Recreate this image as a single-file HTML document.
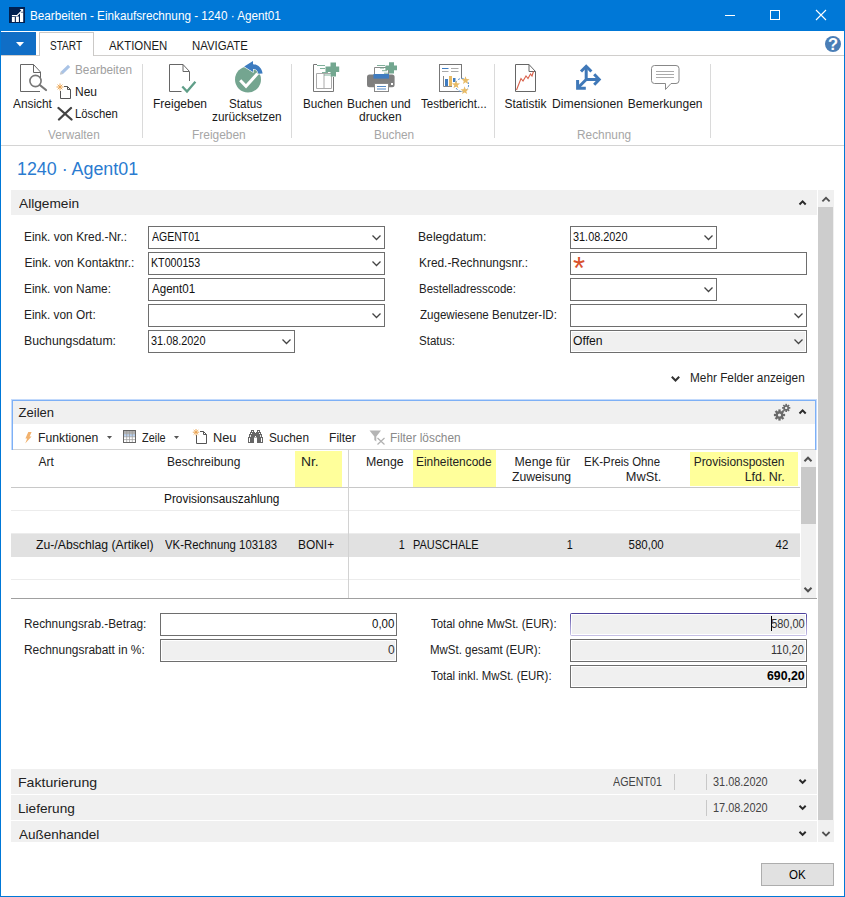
<!DOCTYPE html>
<html lang="de"><head><meta charset="utf-8"><title>Bearbeiten - Einkaufsrechnung - 1240 · Agent01</title>
<style>
*{box-sizing:border-box;margin:0;padding:0}
html,body{width:845px;height:897px;overflow:hidden;background:#fff}
body{font-family:"Liberation Sans", sans-serif;font-size:12px;color:#222;position:relative}
.b{position:absolute;display:block}
.t{position:absolute;white-space:pre;line-height:20px;height:20px}
</style></head><body>
<section aria-label="window">
<div class="b" style="left:0px;top:0px;width:845px;height:897px;background:#fff;"></div>
<div class="b" style="left:0px;top:0px;width:845px;height:31px;background:#0078d7;"></div>
<div class="b" style="left:0px;top:31px;width:1px;height:866px;background:#0078d7;"></div>
<div class="b" style="left:844px;top:31px;width:1px;height:866px;background:#0078d7;"></div>
<div class="b" style="left:0px;top:896px;width:845px;height:1px;background:#0078d7;"></div>
</section>
<section aria-label="Titelleiste">
<div class="b" style="left:725px;top:15px;width:10px;height:1px;background:#fff;"></div>
<div class="b" style="left:770px;top:10px;width:10px;height:10px;border:1px solid #fff;"></div>
<svg class="b" style="left:9px;top:7px" width="16" height="16" viewBox="0 0 16 16"><rect width="16" height="16" fill="#002050"/><path d="M2.9 15V10h2.9v5zM6.9 15V9.5h3v5.5zM11 15V5.6h3.200V15z" fill="#fff"/><path d="M2.900 8.600H8L13 3.600" stroke="#fff" stroke-width="1.200" fill="none"/><path d="M10.600 1.900h3.600v3.600z" fill="#fff"/></svg>
<svg class="b" style="left:815px;top:9px" width="12" height="12" viewBox="0 0 12 12"><path d="M1 1L11 11M11 1L1 11" stroke="#fff" stroke-width="1.1" fill="none"/></svg>
<div class="t" style="top:5.84px;font-size:12px;color:#fff;left:29.52px;transform-origin:0 0;transform:scaleX(0.9766);">Bearbeiten - Einkaufsrechnung - 1240 · Agent01</div>
</section>
<section aria-label="Registerkarten">
<div class="b" style="left:1px;top:55px;width:843px;height:1px;background:#d0cecc;"></div>
<div class="b" style="left:1px;top:32px;width:35px;height:23px;background:#106ec6;"></div>
<div class="b" style="left:39px;top:32px;width:55px;height:24px;background:#fff;border:1px solid #cbc9c7;border-bottom:none;"></div>
<svg class="b" style="left:15.5px;top:42px" width="8" height="5" viewBox="0 0 8 5"><path d="M0 0h8l-4 4.5z" fill="#fff"/></svg>
<svg class="b" style="left:825px;top:36px" width="16" height="16" viewBox="0 0 16 16"><circle cx="8" cy="8" r="8" fill="#4a7eb6"/></svg>
<div class="t" style="top:35.84px;font-size:12px;color:#1a1a1a;left:49.66px;transform-origin:0 0;transform:scaleX(0.8378);">START</div>
<div class="t" style="top:35.84px;font-size:12px;color:#1a1a1a;left:108.50px;transform-origin:0 0;transform:scaleX(0.9508);">AKTIONEN</div>
<div class="t" style="top:35.84px;font-size:12px;color:#1a1a1a;left:191.55px;transform-origin:0 0;transform:scaleX(0.9483);">NAVIGATE</div>
<div class="t" style="top:34.28px;font-size:16.5px;color:#fff;font-weight:bold;left:827.95px;transform-origin:50% 0;">?</div>
</section>
<section aria-label="Menüband">
<div class="b" style="left:1px;top:145px;width:843px;height:1px;background:#d4d4d4;"></div>
<div class="b" style="left:142px;top:64px;width:1px;height:74px;background:#dadada;"></div>
<div class="b" style="left:291px;top:64px;width:1px;height:74px;background:#dadada;"></div>
<div class="b" style="left:494px;top:64px;width:1px;height:74px;background:#dadada;"></div>
<div class="b" style="left:710px;top:64px;width:1px;height:74px;background:#dadada;"></div>
<svg class="b" style="left:18px;top:62px" width="32" height="32" viewBox="0 0 32 32"><path d="M15.5 2.5H2.5V29.5H22M22.5 10V17" stroke="#666" fill="none"/><path d="M15.5 2.5V10.5H22.5M15.5 2.5L22.5 10" stroke="#666" fill="none"/><circle cx="17.5" cy="19" r="5.6" stroke="#777" stroke-width="1.6" fill="#fff"/><path d="M21.8 23L28 28" stroke="#777" stroke-width="2.2" stroke-linecap="round"/></svg>
<svg class="b" style="left:58px;top:64px" width="14" height="12" viewBox="0 0 14 12"><path d="M2 10.5L3 7.5L10 0.8L12.2 3L5 10z" fill="#a9c3e6"/><path d="M2 10.5L3 7.5L5 10z" fill="#c8c8c8"/></svg>
<svg class="b" style="left:56px;top:83px" width="16" height="17" viewBox="0 0 16 17"><path d="M4.5 8V15.5H14.5V6.5L11.5 3.5H8" stroke="#555" fill="none"/><path d="M11.5 3.5V6.5H14.5" stroke="#555" fill="none"/><path d="M4 0.5V7.5M0.5 4H7.5M1.6 1.6L6.4 6.4M6.4 1.6L1.6 6.4" stroke="#eaa04a" stroke-width="0.9"/></svg>
<svg class="b" style="left:57px;top:106px" width="16" height="16" viewBox="0 0 16 16"><path d="M1.5 2L14.5 13.5M14 2L2 13.5" stroke="#444" stroke-width="2.3" stroke-linecap="round"/></svg>
<svg class="b" style="left:167px;top:62px" width="32" height="32" viewBox="0 0 32 32"><path d="M16 2.5H2.5V29.5H14.5M22.5 10V19" stroke="#666" fill="none"/><path d="M16 2.5V9.5H22.5M16 2.5L22.5 9.5" stroke="#666" fill="none"/><path d="M15.3 24.5L20 29.5L28.4 19.8" stroke="#5f9e88" stroke-width="2.3" fill="none"/></svg>
<svg class="b" style="left:232px;top:60px" width="34" height="34" viewBox="0 0 34 34"><circle cx="16" cy="19.5" r="13" fill="#74a590"/><path d="M8.2 20.3L14 26.3L25.5 13.6" stroke="#fff" stroke-width="3" fill="none"/><path d="M12.2 6.5L21 1V4.2C26 4.4 30 8 30.6 13.6L26.4 13.8C25.8 10.6 24 9 21 8.9V12z" fill="#3d7cc0" stroke="#fff" stroke-width="1.2" paint-order="stroke"/></svg>
<svg class="b" style="left:311px;top:60px" width="32" height="34" viewBox="0 0 32 34"><path d="M6 4.5H2.5V31.5H22.5V17" stroke="#777" fill="none"/><path d="M5.5 13.5H20.5V28.5H5.5zM13 13.5V28.5" stroke="#aaa" fill="none"/><path d="M19.5 2.5h5.5v4h3.2v5.6H25v4.4h-5.5v-4.4h-5v-5.6h5z" fill="#73a790"/><path d="M6 5.5H14M9 8.5H14M11 12.5H17M13 15H19" stroke="#73a790" stroke-width="0.9"/></svg>
<svg class="b" style="left:365px;top:60px" width="34" height="34" viewBox="0 0 34 34"><path d="M9.5 15V7.5H23.5V15" stroke="#888" fill="#fff"/><rect x="2" y="14.5" width="27.6" height="12.8" rx="2.5" fill="#7f7f7f"/><rect x="8.5" y="14" width="15.5" height="4.6" fill="#3f7cc0"/><rect x="9.5" y="23.5" width="14" height="8" fill="#fff" stroke="#888"/><path d="M12 26.5H21M12 29H21" stroke="#3f7cc0" stroke-width="0.9"/><rect x="26" y="23" width="2" height="2" fill="#fff"/><path d="M24 2.3h5v3.1h3v4.9h-3v3.2h-5v-3.2h-3.6V5.4H24z" fill="#73a790"/><path d="M12 5.5H20M15 8H19M17 10.7H22M19 13.2H23" stroke="#73a790" stroke-width="0.9"/></svg>
<svg class="b" style="left:437px;top:62px" width="36" height="34" viewBox="0 0 36 34"><rect x="2.5" y="2.5" width="22" height="27" fill="#fff" stroke="#777"/><path d="M5 6.5H11.5" stroke="#3f7cc0"/><path d="M14 6.5H21.5M5 9.5H11.5M14 9.5H21.5" stroke="#aaa"/><path d="M6.5 14V24.5H15" stroke="#888" fill="none"/><rect x="8" y="17" width="3" height="7" fill="#3f7cc0"/><rect x="12" y="14" width="3" height="10" fill="#e8bb66"/><rect x="16" y="16" width="2.5" height="4" fill="#3f7cc0"/><circle cx="25" cy="23" r="6.6" fill="#fff" stroke="#4a86c8" stroke-width="0.9" stroke-dasharray="2.2 1.6"/><polygon points="28.50,14.20 29.56,17.04 32.59,17.17 30.22,19.06 31.03,21.98 28.50,20.31 25.97,21.98 26.78,19.06 24.41,17.17 27.44,17.04" fill="#e8bb66"/><polygon points="19.00,18.50 20.06,21.34 23.09,21.47 20.72,23.36 21.53,26.28 19.00,24.61 16.47,26.28 17.28,23.36 14.91,21.47 17.94,21.34" fill="#e8bb66"/><polygon points="27.60,24.30 28.66,27.14 31.69,27.27 29.32,29.16 30.13,32.08 27.60,30.41 25.07,32.08 25.88,29.16 23.51,27.27 26.54,27.14" fill="#e8bb66"/></svg>
<svg class="b" style="left:513px;top:62px" width="26" height="32" viewBox="0 0 26 32"><path d="M16 2.5H2.5V29.5H22.5V9.5z" stroke="#666" fill="#fff"/><path d="M16 2.5V9.5H22.5" stroke="#666" fill="none"/><path d="M3.5 28L8 16.5L10 19L13 14L15 16.5L17.5 12L19 14L20.5 9.5" stroke="#d9604a" stroke-width="1.1" fill="none"/></svg>
<svg class="b" style="left:573px;top:62px" width="32" height="32" viewBox="0 0 32 32"><path d="M13.2 17.5V5M13.2 17.5H26M13.2 17.5L5 25.7" stroke="#3f78b8" stroke-width="3" fill="none"/><path d="M8 9.5L13.2 4.3L18.4 9.5M21.2 12.3L26.2 17.5L21.2 22.7M4.6 18V26.2H12.8" stroke="#3f78b8" stroke-width="3" fill="none"/></svg>
<svg class="b" style="left:649px;top:63px" width="32" height="30" viewBox="0 0 32 30"><path d="M5.5 2.5H27A3 3 0 0 1 30 5.5V17.5A3 3 0 0 1 27 20.500H22L16.5 26.500V20.500H5.500A3 3 0 0 1 2.500 17.500V5.500A3 3 0 0 1 5.500 2.500z" stroke="#888" fill="#fff"/><path d="M7 8.500H25M7 11.500H25M7 14.500H25" stroke="#aaa"/></svg>
<div class="t" style="top:93.84px;font-size:12px;color:#1a1a1a;left:12.50px;transform-origin:0 0;transform:scaleX(0.9872);">Ansicht</div>
<div class="t" style="top:60.34px;font-size:12px;color:#a0a0a0;left:75.02px;transform-origin:0 0;transform:scaleX(0.9821);">Bearbeiten</div>
<div class="t" style="top:81.84px;font-size:12px;color:#1a1a1a;left:75.00px;transform-origin:0 0;">Neu</div>
<div class="t" style="top:103.84px;font-size:12px;color:#1a1a1a;left:75.06px;transform-origin:0 0;transform:scaleX(0.9432);">Löschen</div>
<div class="t" style="top:124.84px;font-size:12px;color:#a6a6a6;left:47.70px;transform-origin:0 0;transform:scaleX(0.9808);">Verwalten</div>
<div class="t" style="top:93.84px;font-size:12px;color:#1a1a1a;left:153.00px;transform-origin:0 0;">Freigeben</div>
<div class="t" style="top:93.84px;font-size:12px;color:#1a1a1a;left:229.03px;transform-origin:0 0;transform:scaleX(0.9697);">Status</div>
<div class="t" style="top:106.84px;font-size:12px;color:#1a1a1a;left:212.00px;transform-origin:0 0;transform:scaleX(0.9857);">zurücksetzen</div>
<div class="t" style="top:124.84px;font-size:12px;color:#a6a6a6;left:191.71px;transform-origin:0 0;transform:scaleX(0.9942);">Freigeben</div>
<div class="t" style="top:93.84px;font-size:12px;color:#1a1a1a;left:302.73px;transform-origin:0 0;transform:scaleX(0.9744);">Buchen</div>
<div class="t" style="top:93.84px;font-size:12px;color:#1a1a1a;left:347.41px;transform-origin:0 0;transform:scaleX(0.9937);">Buchen und</div>
<div class="t" style="top:106.84px;font-size:12px;color:#1a1a1a;left:359.00px;transform-origin:0 0;">drucken</div>
<div class="t" style="top:93.84px;font-size:12px;color:#1a1a1a;left:421.00px;transform-origin:0 0;transform:scaleX(0.9642);">Testbericht...</div>
<div class="t" style="top:124.84px;font-size:12px;color:#a6a6a6;left:374.01px;transform-origin:0 0;transform:scaleX(0.9872);">Buchen</div>
<div class="t" style="top:93.84px;font-size:12px;color:#1a1a1a;left:504.50px;transform-origin:0 0;">Statistik</div>
<div class="t" style="top:93.84px;font-size:12px;color:#1a1a1a;left:551.99px;transform-origin:0 0;transform:scaleX(1.0147);">Dimensionen</div>
<div class="t" style="top:93.84px;font-size:12px;color:#1a1a1a;left:627.80px;transform-origin:0 0;">Bemerkungen</div>
<div class="t" style="top:124.84px;font-size:12px;color:#a6a6a6;left:576.61px;transform-origin:0 0;transform:scaleX(0.9887);">Rechnung</div>
</section>
<section aria-label="Seitentitel">
<div class="t" style="top:158.76px;font-size:18px;color:#2a7bd0;left:16.51px;transform-origin:0 0;transform:scaleX(0.9917);">1240 · Agent01</div>
</section>
<section aria-label="Allgemein">
<div class="b" style="left:11px;top:190px;width:806px;height:25px;background:#f0f0f0;"></div>
<div class="b" style="left:148px;top:226px;width:237px;height:23px;background:#fff;border:1px solid #6e6e6e;"></div>
<div class="b" style="left:148px;top:252px;width:237px;height:23px;background:#fff;border:1px solid #6e6e6e;"></div>
<div class="b" style="left:148px;top:278px;width:237px;height:23px;background:#fff;border:1px solid #6e6e6e;"></div>
<div class="b" style="left:148px;top:304px;width:237px;height:23px;background:#fff;border:1px solid #6e6e6e;"></div>
<div class="b" style="left:148px;top:330px;width:147px;height:23px;background:#fff;border:1px solid #6e6e6e;"></div>
<div class="b" style="left:570px;top:226px;width:147px;height:23px;background:#fff;border:1px solid #6e6e6e;"></div>
<div class="b" style="left:570px;top:252px;width:237px;height:23px;background:#fff;border:1px solid #6e6e6e;"></div>
<div class="b" style="left:573px;top:249px;font-size:31px;line-height:40px;color:#d9512c">*</div>
<div class="b" style="left:570px;top:278px;width:147px;height:23px;background:#fff;border:1px solid #6e6e6e;"></div>
<div class="b" style="left:570px;top:304px;width:237px;height:23px;background:#fff;border:1px solid #6e6e6e;"></div>
<div class="b" style="left:570px;top:330px;width:237px;height:23px;background:#fff;border:1px solid #6e6e6e;"></div>
<div class="b" style="left:572px;top:332px;width:233px;height:19px;background:#f0f0f0;"></div>
<svg class="b" style="left:798px;top:199px" width="9" height="8" viewBox="0 0 9 8"><path d="M1.5 5.5L4.6 2.4L7.7 5.5" stroke="#2a2a2a" stroke-width="2" fill="none"/></svg>
<svg class="b" style="left:372px;top:235px" width="9" height="6" viewBox="0 0 9 6"><path d="M0.5 0.5L4.5 4.5L8.5 0.5" stroke="#444" stroke-width="1.25" fill="none"/></svg>
<svg class="b" style="left:372px;top:261px" width="9" height="6" viewBox="0 0 9 6"><path d="M0.5 0.5L4.5 4.5L8.5 0.5" stroke="#444" stroke-width="1.25" fill="none"/></svg>
<svg class="b" style="left:372px;top:313px" width="9" height="6" viewBox="0 0 9 6"><path d="M0.5 0.5L4.5 4.5L8.5 0.5" stroke="#444" stroke-width="1.25" fill="none"/></svg>
<svg class="b" style="left:282px;top:339px" width="9" height="6" viewBox="0 0 9 6"><path d="M0.5 0.5L4.5 4.5L8.5 0.5" stroke="#444" stroke-width="1.25" fill="none"/></svg>
<svg class="b" style="left:704px;top:235px" width="9" height="6" viewBox="0 0 9 6"><path d="M0.5 0.5L4.5 4.5L8.5 0.5" stroke="#444" stroke-width="1.25" fill="none"/></svg>
<svg class="b" style="left:704px;top:287px" width="9" height="6" viewBox="0 0 9 6"><path d="M0.5 0.5L4.5 4.5L8.5 0.5" stroke="#444" stroke-width="1.25" fill="none"/></svg>
<svg class="b" style="left:794px;top:313px" width="9" height="6" viewBox="0 0 9 6"><path d="M0.5 0.5L4.5 4.5L8.5 0.5" stroke="#444" stroke-width="1.25" fill="none"/></svg>
<svg class="b" style="left:794px;top:339px" width="9" height="6" viewBox="0 0 9 6"><path d="M0.5 0.5L4.5 4.5L8.5 0.5" stroke="#444" stroke-width="1.25" fill="none"/></svg>
<svg class="b" style="left:670px;top:374px" width="11" height="9" viewBox="0 0 11 9"><path d="M1.8 2.7L5.5 6.5L9.2 2.7" stroke="#333" stroke-width="2" fill="none"/></svg>
<div class="t" style="top:193.50px;font-size:13px;color:#222;left:18.60px;transform-origin:0 0;transform:scaleX(1.0536);">Allgemein</div>
<div class="t" style="top:226.84px;font-size:12px;color:#222;left:24.41px;transform-origin:0 0;transform:scaleX(0.9902);">Eink. von Kred.-Nr.:</div>
<div class="t" style="top:252.84px;font-size:12px;color:#222;left:24.40px;transform-origin:0 0;">Eink. von Kontaktnr.:</div>
<div class="t" style="top:278.84px;font-size:12px;color:#222;left:24.41px;transform-origin:0 0;transform:scaleX(0.9884);">Eink. von Name:</div>
<div class="t" style="top:304.84px;font-size:12px;color:#222;left:24.41px;transform-origin:0 0;transform:scaleX(0.9859);">Eink. von Ort:</div>
<div class="t" style="top:330.84px;font-size:12px;color:#222;left:24.38px;transform-origin:0 0;transform:scaleX(1.0216);">Buchungsdatum:</div>
<div class="t" style="top:226.84px;font-size:12px;color:#111;left:151.50px;transform-origin:0 0;transform:scaleX(0.8759);">AGENT01</div>
<div class="t" style="top:252.84px;font-size:12px;color:#111;left:150.61px;transform-origin:0 0;transform:scaleX(0.8889);">KT000153</div>
<div class="t" style="top:278.84px;font-size:12px;color:#111;left:151.50px;transform-origin:0 0;transform:scaleX(0.9659);">Agent01</div>
<div class="t" style="top:330.84px;font-size:12px;color:#111;left:150.59px;transform-origin:0 0;transform:scaleX(0.9068);">31.08.2020</div>
<div class="t" style="top:226.84px;font-size:12px;color:#222;left:418.49px;transform-origin:0 0;transform:scaleX(1.0138);">Belegdatum:</div>
<div class="t" style="top:252.84px;font-size:12px;color:#222;left:418.51px;transform-origin:0 0;transform:scaleX(0.9907);">Kred.-Rechnungsnr.:</div>
<div class="t" style="top:278.84px;font-size:12px;color:#222;left:418.54px;transform-origin:0 0;transform:scaleX(0.9556);">Bestelladresscode:</div>
<div class="t" style="top:304.84px;font-size:12px;color:#222;left:419.50px;transform-origin:0 0;transform:scaleX(0.9638);">Zugewiesene Benutzer-ID:</div>
<div class="t" style="top:330.84px;font-size:12px;color:#222;left:418.54px;transform-origin:0 0;transform:scaleX(0.9629);">Status:</div>
<div class="t" style="top:226.84px;font-size:12px;color:#111;left:572.59px;transform-origin:0 0;transform:scaleX(0.9068);">31.08.2020</div>
<div class="t" style="top:330.84px;font-size:12px;color:#111;left:572.99px;transform-origin:0 0;transform:scaleX(1.0143);">Offen</div>
<div class="t" style="top:368.44px;font-size:12px;color:#222;left:689.72px;transform-origin:0 0;transform:scaleX(0.9826);">Mehr Felder anzeigen</div>
</section>
<section aria-label="Bildlaufleiste">
<div class="b" style="left:818px;top:190px;width:16px;height:652px;background:#f0f0f0;"></div>
<div class="b" style="left:818px;top:207px;width:15px;height:613px;background:#cdcdcd;"></div>
<svg class="b" style="left:821px;top:195px" width="10" height="8" viewBox="0 0 10 8"><path d="M1.4 6.4L5 2.8L8.600 6.400" stroke="#505050" stroke-width="1.8" fill="none"/></svg>
<svg class="b" style="left:821px;top:830px" width="10" height="8" viewBox="0 0 10 8"><path d="M1.4 2L5 5.600L8.600 2" stroke="#505050" stroke-width="1.8" fill="none"/></svg>
</section>
<section aria-label="Zeilen">
<div class="b" style="left:11px;top:399px;width:806px;height:51px;background:#c3dafc;"></div>
<div class="b" style="left:12px;top:400px;width:804px;height:50px;background:#7db0f6;"></div>
<div class="b" style="left:13px;top:401px;width:802px;height:23px;background:#f0f0f0;"></div>
<div class="b" style="left:13px;top:424px;width:802px;height:25px;background:#fff;"></div>
<div class="b" style="left:13px;top:449px;width:802px;height:1px;background:#d4d4d4;"></div>
<div class="b" style="left:295px;top:451px;width:47px;height:36px;background:#ffff9b;"></div>
<div class="b" style="left:413px;top:450px;width:83px;height:37px;background:#ffff9b;"></div>
<div class="b" style="left:690px;top:452px;width:108px;height:34px;background:#ffff9b;"></div>
<div class="b" style="left:11px;top:487px;width:789px;height:1px;background:#c8c8c8;"></div>
<div class="b" style="left:11px;top:510px;width:789px;height:1px;background:#ececec;"></div>
<div class="b" style="left:11px;top:533px;width:789px;height:1px;background:#ececec;"></div>
<div class="b" style="left:11px;top:579px;width:789px;height:1px;background:#ececec;"></div>
<div class="b" style="left:11px;top:534px;width:789px;height:23px;background:#e1e1e1;"></div>
<div class="b" style="left:348px;top:450px;width:1px;height:148px;background:#d2d2d2;"></div>
<div class="b" style="left:11px;top:598px;width:806px;height:1px;background:#a0a0a0;"></div>
<div class="b" style="left:801px;top:450px;width:15px;height:148px;background:#f0f0f0;"></div>
<div class="b" style="left:801px;top:467px;width:15px;height:57px;background:#c9c9c9;"></div>
<svg class="b" style="left:798px;top:408px" width="9" height="8" viewBox="0 0 9 8"><path d="M1.5 5.5L4.6 2.4L7.7 5.5" stroke="#2a2a2a" stroke-width="2" fill="none"/></svg>
<svg class="b" style="left:107px;top:436px" width="5" height="3" viewBox="0 0 5 3"><path d="M0 0h5l-2.5 3z" fill="#555"/></svg>
<svg class="b" style="left:174px;top:436px" width="5" height="3" viewBox="0 0 5 3"><path d="M0 0h5l-2.5 3z" fill="#555"/></svg>
<svg class="b" style="left:803px;top:455px" width="10" height="8" viewBox="0 0 10 8"><path d="M1.5 6.2L5 2.700L8.500 6.200" stroke="#505050" stroke-width="2" fill="none"/></svg>
<svg class="b" style="left:803px;top:586px" width="10" height="8" viewBox="0 0 10 8"><path d="M1.5 1.800L5 5.300L8.500 1.800" stroke="#505050" stroke-width="2" fill="none"/></svg>
<svg class="b" style="left:772px;top:402px" width="20" height="20" viewBox="0 0 20 20"><path d="M9.78 13.00L13.10 13.00" stroke="#6a6a6a" stroke-width="2.35"/><path d="M9.11 14.61L11.46 16.96" stroke="#6a6a6a" stroke-width="2.35"/><path d="M7.50 15.28L7.50 18.60" stroke="#6a6a6a" stroke-width="2.35"/><path d="M5.89 14.61L3.54 16.96" stroke="#6a6a6a" stroke-width="2.35"/><path d="M5.22 13.00L1.90 13.00" stroke="#6a6a6a" stroke-width="2.35"/><path d="M5.89 11.39L3.54 9.04" stroke="#6a6a6a" stroke-width="2.35"/><path d="M7.50 10.72L7.50 7.40" stroke="#6a6a6a" stroke-width="2.35"/><path d="M9.11 11.39L11.46 9.04" stroke="#6a6a6a" stroke-width="2.35"/><circle cx="7.5" cy="13" r="2.70" stroke="#6a6a6a" stroke-width="2.20" fill="none"/><path d="M15.82 5.90L18.30 5.90" stroke="#6a6a6a" stroke-width="1.72"/><path d="M15.35 7.05L17.10 8.80" stroke="#6a6a6a" stroke-width="1.72"/><path d="M14.20 7.52L14.20 10.00" stroke="#6a6a6a" stroke-width="1.72"/><path d="M13.05 7.05L11.30 8.80" stroke="#6a6a6a" stroke-width="1.72"/><path d="M12.58 5.90L10.10 5.90" stroke="#6a6a6a" stroke-width="1.72"/><path d="M13.05 4.75L11.30 3.00" stroke="#6a6a6a" stroke-width="1.72"/><path d="M14.20 4.28L14.20 1.80" stroke="#6a6a6a" stroke-width="1.72"/><path d="M15.35 4.75L17.10 3.00" stroke="#6a6a6a" stroke-width="1.72"/><circle cx="14.2" cy="5.9" r="1.95" stroke="#6a6a6a" stroke-width="1.50" fill="none"/></svg>
<svg class="b" style="left:24px;top:431px" width="9" height="13" viewBox="0 0 9 13"><path d="M4.3 1L7.6 1L5.6 5.4L7.6 5.4L1.2 12.4L3.2 7.6L1.4 7.600z" fill="#f2b26e"/></svg>
<svg class="b" style="left:123px;top:430px" width="13" height="13" viewBox="0 0 13 13"><rect x="0.5" y="0.5" width="12" height="12" fill="#fff" stroke="#666"/><rect x="1" y="1" width="11" height="2.6" fill="#b0b0b0"/><rect x="1" y="4" width="11" height="2.6" fill="#bcd3f0"/><path d="M1 3.8H12M1 6.8H12M1 9.6H12M3.7 1V12M6.5 1V12M9.3 1V12" stroke="#9a9a9a" stroke-width="0.7"/></svg>
<svg class="b" style="left:192px;top:428px" width="16" height="17" viewBox="0 0 16 17"><path d="M4.5 7V15.500H14.500V6.500L11.500 3.500H8" stroke="#555" fill="none"/><path d="M11.500 3.500V6.500H14.500" stroke="#555" fill="none"/><path d="M4 1V7.500M0.800 4.200H7.200M1.700 2L6.300 6.500M6.300 2L1.700 6.500" stroke="#eaa04a" stroke-width="0.9"/></svg>
<svg class="b" style="left:248px;top:430px" width="15" height="13" viewBox="0 0 15 13"><path d="M3 0h3v2h1v5h-1v6H0V7h1V4h1V2h1zM9 0h3v2h1v2h1v3h1v6H9V7H8V2h1z" fill="#666"/><rect x="6" y="3" width="3" height="4.500" fill="#666"/><path d="M1 8h1v4H1zM13 8h1v4h-1zM4 1h1v1H4zM10 1h1v1h-1zM3 3h1v1H3zM11 3h1v1h-1zM7 6h1v1H7zM2.200 5h.8v2h-.8zM12 5h.8v2H12z" fill="#fff"/></svg>
<svg class="b" style="left:369px;top:430px" width="17" height="15" viewBox="0 0 17 15"><path d="M0.500 0.500H12L7.300 6.500V11.500L5.300 10V6.500z" fill="#b4b4b4"/><path d="M8.500 8L15.500 14.500M15.500 8L8.500 14.500" stroke="#b0b0b0" stroke-width="1.200"/></svg>
<div class="t" style="top:402.50px;font-size:13px;color:#222;left:18.60px;transform-origin:0 0;">Zeilen</div>
<div class="t" style="top:427.84px;font-size:12px;color:#222;left:38.28px;transform-origin:0 0;transform:scaleX(1.0172);">Funktionen</div>
<div class="t" style="top:427.84px;font-size:12px;color:#222;left:141.70px;transform-origin:0 0;transform:scaleX(0.9077);">Zeile</div>
<div class="t" style="top:427.84px;font-size:12px;color:#222;left:213.34px;transform-origin:0 0;transform:scaleX(1.0650);">Neu</div>
<div class="t" style="top:427.84px;font-size:12px;color:#222;left:268.52px;transform-origin:0 0;transform:scaleX(0.9821);">Suchen</div>
<div class="t" style="top:427.84px;font-size:12px;color:#222;left:329.19px;transform-origin:0 0;transform:scaleX(1.0077);">Filter</div>
<div class="t" style="top:427.84px;font-size:12px;color:#8a8a8a;left:389.51px;transform-origin:0 0;transform:scaleX(0.9900);">Filter löschen</div>
<div class="t" style="top:451.84px;font-size:12px;color:#222;left:38.50px;transform-origin:0 0;">Art</div>
<div class="t" style="top:451.84px;font-size:12px;color:#222;left:167.00px;transform-origin:0 0;">Beschreibung</div>
<div class="t" style="top:451.84px;font-size:12px;color:#222;left:300.65px;transform-origin:0 0;transform:scaleX(1.1538);">Nr.</div>
<div class="t" style="top:451.84px;font-size:12px;color:#222;right:441.28px;transform-origin:100% 0;transform:scaleX(1.0286);">Menge</div>
<div class="t" style="top:451.84px;font-size:12px;color:#222;left:415.71px;transform-origin:0 0;transform:scaleX(0.9933);">Einheitencode</div>
<div class="t" style="top:451.84px;font-size:12px;color:#222;right:275.17px;transform-origin:100% 0;transform:scaleX(1.0264);">Menge für</div>
<div class="t" style="top:466.84px;font-size:12px;color:#222;right:274.15px;transform-origin:100% 0;transform:scaleX(1.0175);">Zuweisung</div>
<div class="t" style="top:451.84px;font-size:12px;color:#222;right:185.36px;transform-origin:100% 0;transform:scaleX(0.9494);">EK-Preis Ohne</div>
<div class="t" style="top:466.84px;font-size:12px;color:#222;right:183.97px;transform-origin:100% 0;transform:scaleX(1.0645);">MwSt.</div>
<div class="t" style="top:451.84px;font-size:12px;color:#222;right:60.61px;transform-origin:100% 0;transform:scaleX(0.9922);">Provisionsposten</div>
<div class="t" style="top:466.84px;font-size:12px;color:#222;right:60.29px;transform-origin:100% 0;transform:scaleX(1.0351);">Lfd. Nr.</div>
<div class="t" style="top:488.84px;font-size:12px;color:#111;left:164.01px;transform-origin:0 0;transform:scaleX(0.9887);">Provisionsauszahlung</div>
<div class="t" style="top:534.84px;font-size:12px;color:#111;left:35.50px;transform-origin:0 0;transform:scaleX(1.0191);">Zu-/Abschlag (Artikel)</div>
<div class="t" style="top:534.84px;font-size:12px;color:#111;left:165.00px;transform-origin:0 0;transform:scaleX(0.9492);">VK-Rechnung 103183</div>
<div class="t" style="top:534.84px;font-size:12px;color:#111;left:297.51px;transform-origin:0 0;transform:scaleX(0.9943);">BONI+</div>
<div class="t" style="top:534.84px;font-size:12px;color:#111;right:439.88px;transform-origin:100% 0;transform:scaleX(0.9000);">1</div>
<div class="t" style="top:534.84px;font-size:12px;color:#111;left:412.89px;transform-origin:0 0;transform:scaleX(0.9143);">PAUSCHALE</div>
<div class="t" style="top:534.84px;font-size:12px;color:#111;right:272.38px;transform-origin:100% 0;transform:scaleX(0.9000);">1</div>
<div class="t" style="top:534.84px;font-size:12px;color:#111;right:180.83px;transform-origin:100% 0;transform:scaleX(0.9571);">580,00</div>
<div class="t" style="top:534.84px;font-size:12px;color:#111;right:56.36px;transform-origin:100% 0;transform:scaleX(0.9538);">42</div>
</section>
<section aria-label="Summen">
<div class="b" style="left:160px;top:613px;width:237px;height:23px;background:#fff;border:1px solid #6e6e6e;"></div>
<div class="b" style="left:160px;top:639px;width:237px;height:23px;background:#fff;border:1px solid #6e6e6e;"></div>
<div class="b" style="left:162px;top:641px;width:233px;height:19px;background:#f0f0f0;"></div>
<div class="b" style="left:570px;top:613px;width:237px;height:23px;background:linear-gradient(#4a3f9a,#9a92cc 55%,#c8c2e6);border-radius:2px;"></div>
<div class="b" style="left:571px;top:614px;width:235px;height:21px;background:#fff;"></div>
<div class="b" style="left:572px;top:615px;width:233px;height:19px;background:#f0f0f0;"></div>
<div class="b" style="left:570px;top:639px;width:237px;height:23px;background:#fff;border:1px solid #6e6e6e;"></div>
<div class="b" style="left:572px;top:641px;width:233px;height:19px;background:#f0f0f0;"></div>
<div class="b" style="left:570px;top:665px;width:237px;height:23px;background:#fff;border:1px solid #6e6e6e;"></div>
<div class="b" style="left:572px;top:667px;width:233px;height:19px;background:#f0f0f0;"></div>
<div class="b" style="left:771px;top:616px;width:1px;height:15px;background:#000;"></div>
<div class="t" style="top:613.84px;font-size:12px;color:#222;left:24.41px;transform-origin:0 0;transform:scaleX(0.9861);">Rechnungsrab.-Betrag:</div>
<div class="t" style="top:639.84px;font-size:12px;color:#222;left:24.41px;transform-origin:0 0;transform:scaleX(0.9950);">Rechnungsrabatt in %:</div>
<div class="t" style="top:613.84px;font-size:12px;color:#111;right:450.66px;transform-origin:100% 0;transform:scaleX(0.9565);">0,00</div>
<div class="t" style="top:639.84px;font-size:12px;color:#333;right:450.31px;transform-origin:100% 0;">0</div>
<div class="t" style="top:613.84px;font-size:12px;color:#222;left:430.80px;transform-origin:0 0;transform:scaleX(0.9511);">Total ohne MwSt. (EUR):</div>
<div class="t" style="top:639.84px;font-size:12px;color:#222;left:429.84px;transform-origin:0 0;transform:scaleX(0.9553);">MwSt. gesamt (EUR):</div>
<div class="t" style="top:665.84px;font-size:12px;color:#222;left:430.80px;transform-origin:0 0;transform:scaleX(0.9516);">Total inkl. MwSt. (EUR):</div>
<div class="t" style="top:613.84px;font-size:12px;color:#333;right:40.36px;transform-origin:100% 0;transform:scaleX(0.9143);">580,00</div>
<div class="t" style="top:639.84px;font-size:12px;color:#333;right:41.17px;transform-origin:100% 0;transform:scaleX(0.9143);">110,20</div>
<div class="t" style="top:665.84px;font-size:12px;color:#000;font-weight:bold;right:40.28px;transform-origin:100% 0;transform:scaleX(1.0278);">690,20</div>
</section>
<section aria-label="Inforegister">
<div class="b" style="left:11px;top:769px;width:806px;height:25px;background:#f0f0f0;"></div>
<div class="b" style="left:11px;top:795px;width:806px;height:25px;background:#f0f0f0;"></div>
<div class="b" style="left:11px;top:821px;width:806px;height:21px;background:#f0f0f0;"></div>
<div class="b" style="left:674px;top:774px;width:1px;height:16px;background:#c8c8c8;"></div>
<div class="b" style="left:706px;top:774px;width:1px;height:16px;background:#c8c8c8;"></div>
<div class="b" style="left:706px;top:800px;width:1px;height:16px;background:#c8c8c8;"></div>
<svg class="b" style="left:798px;top:778px" width="9" height="8" viewBox="0 0 9 8"><path d="M1.5 1.8L4.6 4.9L7.7 1.8" stroke="#2a2a2a" stroke-width="2" fill="none"/></svg>
<svg class="b" style="left:798px;top:804px" width="9" height="8" viewBox="0 0 9 8"><path d="M1.5 1.8L4.6 4.9L7.7 1.8" stroke="#2a2a2a" stroke-width="2" fill="none"/></svg>
<svg class="b" style="left:798px;top:830px" width="9" height="8" viewBox="0 0 9 8"><path d="M1.5 1.8L4.6 4.9L7.7 1.8" stroke="#2a2a2a" stroke-width="2" fill="none"/></svg>
<div class="t" style="top:772.50px;font-size:13px;color:#222;left:17.52px;transform-origin:0 0;transform:scaleX(1.0845);">Fakturierung</div>
<div class="t" style="top:798.50px;font-size:13px;color:#222;left:17.55px;transform-origin:0 0;transform:scaleX(1.0472);">Lieferung</div>
<div class="t" style="top:824.50px;font-size:13px;color:#222;left:18.60px;transform-origin:0 0;transform:scaleX(1.0390);">Außenhandel</div>
<div class="t" style="top:771.84px;font-size:12px;color:#444;left:613.20px;transform-origin:0 0;transform:scaleX(0.8944);">AGENT01</div>
<div class="t" style="top:771.84px;font-size:12px;color:#444;left:713.39px;transform-origin:0 0;transform:scaleX(0.9102);">31.08.2020</div>
<div class="t" style="top:797.84px;font-size:12px;color:#444;left:713.39px;transform-origin:0 0;transform:scaleX(0.9102);">17.08.2020</div>
</section>
<section aria-label="Schaltflächen">
<div class="b" style="left:761px;top:863px;width:73px;height:23px;background:#e1e1e1;border:1px solid #adadad;"></div>
<div class="t" style="top:864.67px;font-size:12.5px;color:#000;left:788.58px;transform-origin:0 0;transform:scaleX(0.9235);">OK</div>
</section>
</body></html>
